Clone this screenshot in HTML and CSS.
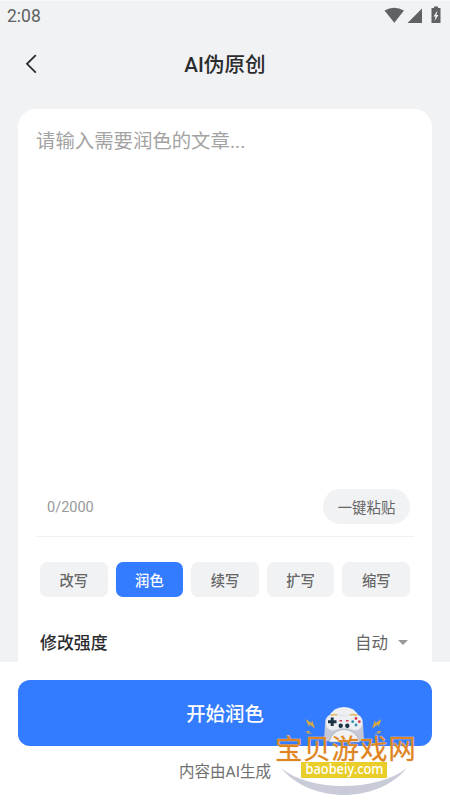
FILE: index.html
```html
<!DOCTYPE html>
<html lang="zh-CN">
<head>
  <meta charset="UTF-8">
  <title>AI伪原创</title>
  <meta name="viewport" content="width=device-width, initial-scale=1.0">
  <link rel="stylesheet" href="styles.css">
</head>
<body>
  <div class="screen">
    <div class="status-bar">
      <span class="time">2:08</span>
      <svg class="status-icons" width="58" height="18" viewBox="0 0 58 18">
        <path d="M0.500 4.500Q10 -1 20 4.500L10.300 16.800Z"/>
        <path d="M23.500 17L38 2.500V17Z"/>
        <path d="M50 0.500h4v1.500h2.500v15h-9v-15H50Z"/>
        <path class="bolt" d="M53.500 4.500L49.500 10.500H51.500L50.500 15L54.500 9H52.500Z"/>
      </svg>
    </div>
    <header class="nav">
      <svg class="back" width="12" height="20" viewBox="0 0 12 20">
        <path d="M10.800 1.200L2 9.800L10.800 18.600"/>
      </svg>
      <h1>AI伪原创</h1>
    </header>
    <main class="card">
      <textarea class="article" placeholder="请输入需要润色的文章..."></textarea>
      <div class="tools">
        <span class="count">0/2000</span>
        <button class="paste">一键粘贴</button>
      </div>
      <div class="tabs">
        <button class="tab">改写</button>
        <button class="tab active">润色</button>
        <button class="tab">续写</button>
        <button class="tab">扩写</button>
        <button class="tab">缩写</button>
      </div>
      <div class="strength">
        <span class="label">修改强度</span>
        <span class="value">自动<i class="arrow"></i></span>
      </div>
    </main>
    <footer class="bottom">
      <button class="submit">开始润色</button>
      <p class="note">内容由AI生成</p>
    </footer>

    <!-- 站点水印 -->
    <svg class="watermark" width="150" height="100" viewBox="270 700 150 100">
      <path fill="#c9cbd9" d="M281 768C310 792 376 792 407 768C377 804 311 804 281 768Z"/>
      <path fill="#eeeff3" d="M329 717Q333 707 344 707Q355 707 359 717L357 735H331Z"/>
      <path fill="#c5c8d5" d="M325 724L324 741L331 741Q334 730 344 730Q354 730 357 741L364 741L363 724Z"/>
      <path fill="#f2f2f4" stroke="#9b9fae" stroke-width=".6" d="M329 742Q333 729.500 344 729.500Q355 729.500 360 742Z"/>
      <path fill="#eeeff3" stroke="#d2d5de" stroke-width=".6" d="M330 715Q337 714 344 716Q351 714 358 715C364 717 364 728 358 730C353 731.500 350 728.500 347 728.500H341C338 728.500 335 731.500 330 730C324 728 324 717 330 715Z"/>
      <path fill="none" stroke="#e6b957" stroke-width="1.500" d="M331 715.500Q334 713.800 337 715M350 715Q353 713.800 357 715.500"/>
      <path fill="none" stroke="#1c3444" stroke-width="3" d="M328 721.700H336.500M332.200 717.500V726"/>
      <g fill="#1c3444">
        <circle cx="340.700" cy="725.700" r="2.200"/>
        <circle cx="347.300" cy="725.700" r="2.200"/>
      </g>
      <g fill="#d83b4c">
        <circle cx="356" cy="718.500" r="1.400"/>
        <circle cx="359.300" cy="721.700" r="1.400"/>
        <rect x="339.500" y="720" width="2.500" height="1.500"/>
        <rect x="346" y="720" width="2.500" height="1.500"/>
      </g>
      <g fill="#2c8caf">
        <circle cx="352.700" cy="721.700" r="1.400"/>
        <circle cx="356" cy="725" r="1.400"/>
      </g>
      <g fill="#d8a845">
        <path d="M305.500 719L311.500 723L312 720L315 728.500L309.500 724.500L309 727Z"/>
        <path d="M304.500 731L310 731L309 732.500L313.500 733.500L306.500 733.500L307.500 732Z"/>
        <path d="M381.500 719L375.500 723L375 720L372 728.500L378 724.500L378.500 727Z"/>
        <path d="M382.500 731L377 731L378 732.500L373.500 733.500L380.500 733.500L379.500 732Z"/>
      </g>
      <text class="site-name" x="275" y="758.500">宝贝游戏网</text>
      <rect x="301" y="762" width="86" height="16" fill="#e9cd29"/>
      <text class="site-url" x="305.500" y="774" textLength="78" lengthAdjust="spacingAndGlyphs">baobeiy.com</text>
    </svg>
  </div>
</body>
</html>
```

FILE: styles.css
```css
* {
  box-sizing: border-box;
}
body {
  margin: 0;
  font-family: Roboto, "Noto Sans CJK SC", sans-serif;
  color: #2b2c2e;
}
button {
  border: none;
  padding: 0;
  font-family: inherit;
}
.screen {
  position: relative;
  display: flex;
  flex-direction: column;
  width: 450px;
  height: 800px;
  overflow: hidden;
  background-color: #f1f2f4;
  border-top: 1px solid #f9f9fa;
}
.status-bar {
  display: flex;
  justify-content: space-between;
  height: 30px;
  padding: 5px 8px 0 7px;
}
.time {
  font-size: 17.5px;
  line-height: 20px;
  color: #606163;
}
.status-icons {
  fill: #606163;
}
.status-icons .bolt {
  fill: #f1f2f4;
}
.nav {
  display: grid;
  grid-template-columns: 42px 1fr 42px;
  align-items: center;
  height: 66px;
}
.back {
  margin-left: 25px;
  fill: none;
  stroke: #2b2c2e;
  stroke-width: 1.8;
}
.nav h1 {
  margin: 0;
  padding-bottom: 2px;
  font-size: 20.6px;
  font-weight: 500;
  text-align: center;
}
.card {
  flex: 1;
  margin: 12px 18px 0;
  padding: 18px 18px 0;
  background-color: #fff;
  border-radius: 18px 18px 0 0;
}
.article {
  display: block;
  width: 100%;
  height: 350px;
  padding: 0;
  border: none;
  resize: none;
  font-family: inherit;
  font-size: 19.4px;
  line-height: 30px;
}
.article::placeholder {
  color: #a3a3a3;
}
.tools {
  display: flex;
  align-items: center;
  justify-content: space-between;
  height: 60px;
  padding: 0 4px 0 11px;
  border-bottom: 1px solid #f0f1f3;
}
.count {
  padding-top: 1px;
  font-size: 14.5px;
  color: #999;
}
.paste {
  width: 87px;
  height: 35px;
  padding-bottom: 1px;
  border-radius: 18px;
  background-color: #f1f2f4;
  font-size: 14.4px;
  color: #666;
}
.tabs {
  display: flex;
  gap: 8px;
  padding: 25px 4px 0;
}
.tab {
  flex: 1;
  height: 35px;
  border-radius: 7px;
  background-color: #f1f2f4;
  font-size: 14.3px;
  font-weight: 500;
  color: #666;
}
.tab.active {
  background-color: #337bff;
  color: #fff;
}
.strength {
  display: flex;
  align-items: center;
  justify-content: space-between;
  height: 28px;
  margin-top: 31px;
  padding: 0 6px 0 4px;
}
.label {
  padding-bottom: 2px;
  font-size: 16.9px;
  font-weight: 500;
}
.value {
  display: flex;
  align-items: center;
  gap: 10px;
  font-size: 16.5px;
  color: #666;
}
.arrow {
  border: 5px solid transparent;
  border-top-color: #999;
  border-bottom: none;
}
.bottom {
  height: 138px;
  padding: 18px 18px 0;
  background-color: #fff;
}
.submit {
  display: block;
  width: 100%;
  height: 66px;
  padding-bottom: 1px;
  border-radius: 12px;
  background-color: #337bff;
  font-size: 19.4px;
  font-weight: 500;
  color: #fff;
}
.note {
  margin: 13px 0 0;
  font-size: 15.5px;
  line-height: 26px;
  text-align: center;
  color: #707070;
}
.watermark {
  position: absolute;
  left: 270px;
  bottom: 0;
}
.site-name {
  font-family: "Noto Sans CJK SC", sans-serif;
  font-size: 27.5px;
  letter-spacing: 0.8px;
  fill: #df8420;
  stroke: #efd3b4;
  stroke-width: 0.6px;
  paint-order: stroke;
}
.site-url {
  font-family: "Noto Sans", sans-serif;
  font-size: 14.5px;
  font-weight: 500;
  fill: #fff;
}
```
